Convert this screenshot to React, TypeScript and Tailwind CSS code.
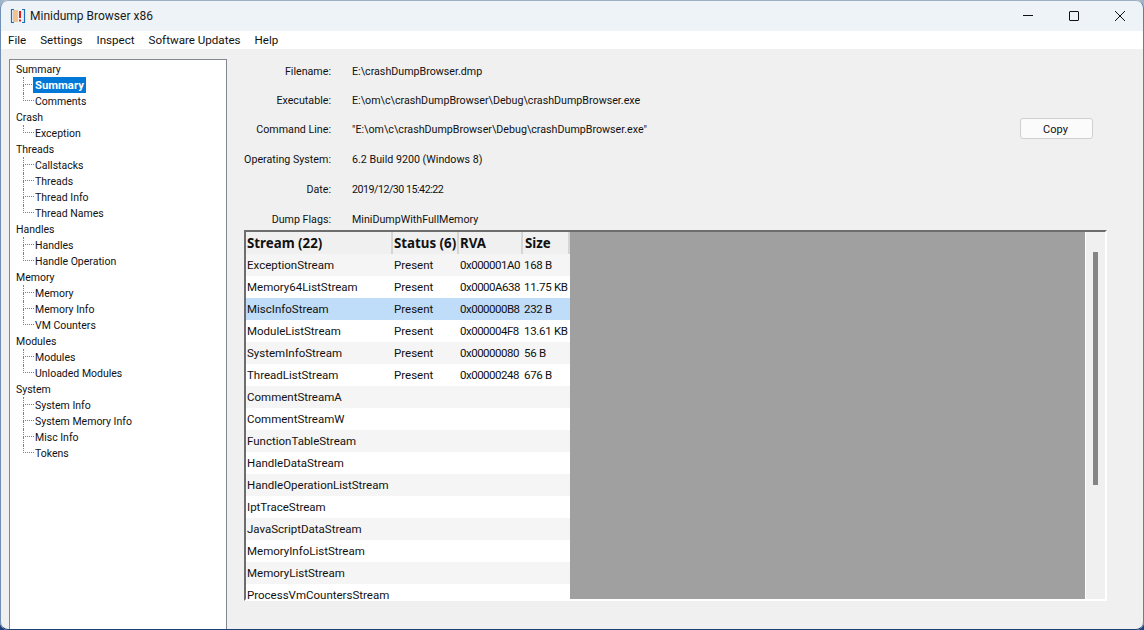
import React from 'react'

const tree = [
  { name: 'Summary', items: ['Summary', 'Comments'] },
  { name: 'Crash', items: ['Exception'] },
  { name: 'Threads', items: ['Callstacks', 'Threads', 'Thread Info', 'Thread Names'] },
  { name: 'Handles', items: ['Handles', 'Handle Operation'] },
  { name: 'Memory', items: ['Memory', 'Memory Info', 'VM Counters'] },
  { name: 'Modules', items: ['Modules', 'Unloaded Modules'] },
  { name: 'System', items: ['System Info', 'System Memory Info', 'Misc Info', 'Tokens'] }
]

const fields = [
  ['Filename:', 'E:\\crashDumpBrowser.dmp', 'h-[30px]', ''],
  ['Executable:', 'E:\\om\\c\\crashDumpBrowser\\Debug\\crashDumpBrowser.exe', 'h-[28px]', ''],
  ['Command Line:', '"E:\\om\\c\\crashDumpBrowser\\Debug\\crashDumpBrowser.exe"', 'h-[30px]', ''],
  ['Operating System:', '6.2 Build 9200 (Windows 8)', 'h-[30px]', ''],
  ['Date:', '2019/12/30 15:42:22', 'h-[30px]', 'tracking-[-0.5px]'],
  ['Dump Flags:', 'MiniDumpWithFullMemory', 'h-[30px]', '']
]

const streams = [
  ['ExceptionStream', 'Present', '0x000001A0', '168 B'],
  ['Memory64ListStream', 'Present', '0x0000A638', '11.75 KB'],
  ['MiscInfoStream', 'Present', '0x000000B8', '232 B'],
  ['ModuleListStream', 'Present', '0x000004F8', '13.61 KB'],
  ['SystemInfoStream', 'Present', '0x00000080', '56 B'],
  ['ThreadListStream', 'Present', '0x00000248', '676 B'],
  ['CommentStreamA'],
  ['CommentStreamW'],
  ['FunctionTableStream'],
  ['HandleDataStream'],
  ['HandleOperationListStream'],
  ['IptTraceStream'],
  ['JavaScriptDataStream'],
  ['MemoryInfoListStream'],
  ['MemoryListStream'],
  ['ProcessVmCountersStream']
]

const Logo = () => (
  <svg width="16" height="16" viewBox="0 0 16 16">
    <path d="M4 1.5H1.5v13H4" fill="none" stroke="#1f6fb5" strokeWidth="1.2" />
    <path d="M12 1.5h2.5v13H12" fill="none" stroke="#1f6fb5" strokeWidth="1.2" />
    <rect x="3" y="2" width="5" height="12" fill="#f0c48c" />
    <rect x="9" y="3" width="2" height="7" fill="#e02020" />
    <rect x="9" y="11.5" width="2" height="2" fill="#e02020" />
  </svg>
)

const TreeChild = ({ label, last, selected }: { label: string; last: boolean; selected: boolean }) => (
  <div className="flex h-4 items-center pl-[8px]">
    <div className="flex h-4 w-[11px] shrink-0 flex-col">
      <div className="h-2 border-b border-l border-dotted border-[#808080]" />
      {!last && <div className="h-2 border-l border-dotted border-[#808080]" />}
    </div>
    {selected ? (
      <span className="ml-[-1px] h-4 bg-[#0078d7] px-[2px] text-[11.3px] font-bold leading-[18px] text-white">{label}</span>
    ) : (
      <span className="h-4 pl-[1px] leading-[18px]">{label}</span>
    )}
  </div>
)

export default function App() {
  return (
    <div className="relative h-[630px] w-[1144px] overflow-hidden bg-gradient-to-b from-[#a0b4c8] to-[#1d3f78] font-['Roboto',sans-serif] text-[11.5px] text-[#111]">
      <div className="flex h-[630px] flex-col overflow-hidden rounded-lg">
        {/* title bar */}
        <div className="flex h-[31px] items-center bg-[#eef3f8] pl-[10px] text-[#1a1a1a]">
          <Logo />
          <span className="ml-[4px] text-[12px]">Minidump Browser x86</span>
          <div className="ml-auto flex h-full items-center pr-[1px]">
            <div className="flex w-[46px] justify-center">
              <div className="h-px w-[10px] bg-[#111]" />
            </div>
            <div className="flex w-[46px] justify-center">
              <div className="h-[10px] w-[10px] rounded-[1px] border border-[#111]" />
            </div>
            <div className="flex w-[46px] justify-center">
              <svg width="10" height="10" viewBox="0 0 10 10">
                <path d="M0 0L10 10M10 0L0 10" stroke="#111" strokeWidth="1" />
              </svg>
            </div>
          </div>
        </div>
        {/* menu */}
        <div className="flex h-[18px] items-center gap-[14px] bg-white pl-[8px] text-[11.6px] leading-[18px]">
          <span>File</span>
          <span>Settings</span>
          <span>Inspect</span>
          <span>Software Updates</span>
          <span>Help</span>
        </div>
        {/* body */}
        <div className="flex min-h-0 flex-1 bg-[#f0f0f0] pl-[9px] pt-[10px]">
          <div className="h-[571px] w-[218px] shrink-0 border-l border-r border-t border-[#828790] bg-white pl-[5px] pt-px text-[10.5px]">
            {tree.map(group => (
              <div key={group.name}>
                <div className="h-4 pl-px leading-[18px]">{group.name}</div>
                {group.items.map((item, i) => (
                  <TreeChild
                    key={item}
                    label={item}
                    last={i === group.items.length - 1}
                    selected={group.name === 'Summary' && item === 'Summary'}
                  />
                ))}
              </div>
            ))}
          </div>
          <div className="flex min-w-0 flex-1 flex-col pl-[17px]">
            <div className="-mt-[2px] h-[173px] shrink-0 text-[10.7px]">
              {fields.map(([label, value, height, tracking]) => (
                <div key={label} className={`flex items-center ${height}`}>
                  <span className="w-[87px] shrink-0 whitespace-nowrap text-right">{label}</span>
                  <span className={`ml-[21px] whitespace-nowrap ${tracking}`}>{value}</span>
                  {label === 'Command Line:' && (
                    <button className="mb-[3px] ml-auto mr-[51px] h-[21px] w-[73px] rounded-[3px] border border-[#d0d0d0] bg-[#fbfbfb] pr-[2px] pt-[3px] text-[11px]">
                      Copy
                    </button>
                  )}
                </div>
              ))}
            </div>
            {/* stream list */}
            <div className="flex h-[371px] w-[863px] border-2 border-b-white border-l-[#6d6d6d] border-r-white border-t-[#6d6d6d]">
              <div className="w-[324px] shrink-0 overflow-hidden bg-white">
                <div className="flex h-[22px] items-center whitespace-nowrap bg-[#f0f0f0] font-['Noto_Sans',sans-serif] text-[13.3px] font-bold">
                  <span className="w-[147px] shrink-0 border-r-2 border-[#d5d5d5] pl-px leading-[22px]">Stream (22)</span>
                  <span className="w-[66px] shrink-0 border-r-2 border-[#d5d5d5] pl-[1px] leading-[22px]">Status (6)</span>
                  <span className="w-[64px] shrink-0 border-r-2 border-[#d5d5d5] pl-[1px] leading-[22px]">RVA</span>
                  <span className="w-[47px] shrink-0 border-r-2 border-[#d5d5d5] pl-[2px] leading-[22px]">Size</span>
                </div>
                {streams.map((row, i) => (
                  <div
                    key={row[0]}
                    className={`flex h-[22px] items-center whitespace-nowrap pt-px ${
                      i === 2 ? 'bg-[#bfdcf8]' : i % 2 === 0 ? 'bg-[#f5f5f5]' : 'bg-white'
                    }`}
                  >
                    <span className="w-[147px] shrink-0 pl-px">{row[0]}</span>
                    <span className="w-[66px] shrink-0 pl-[1px]">{row[1]}</span>
                    <span className="w-[64px] shrink-0 pl-[1px] tracking-[-0.5px]">{row[2]}</span>
                    <span className="shrink-0 pl-[1px] tracking-[-0.3px]">{row[3]}</span>
                  </div>
                ))}
              </div>
              <div className="flex-1 bg-[#a0a0a0]" />
              <div className="w-[20px] shrink-0 border-l border-white bg-[#f0f0f0] pl-[7px] pt-[20px]">
                <div className="h-[233px] w-[5px] bg-[#858585]" />
              </div>
            </div>
          </div>
        </div>
      </div>
      {/* window frame */}
      <div className="pointer-events-none absolute inset-0 rounded-lg border border-b-[#1d3f78] border-l-[#6f8fb5] border-r-[#5f7fa5] border-t-[#9db0c3]" />
    </div>
  )
}
